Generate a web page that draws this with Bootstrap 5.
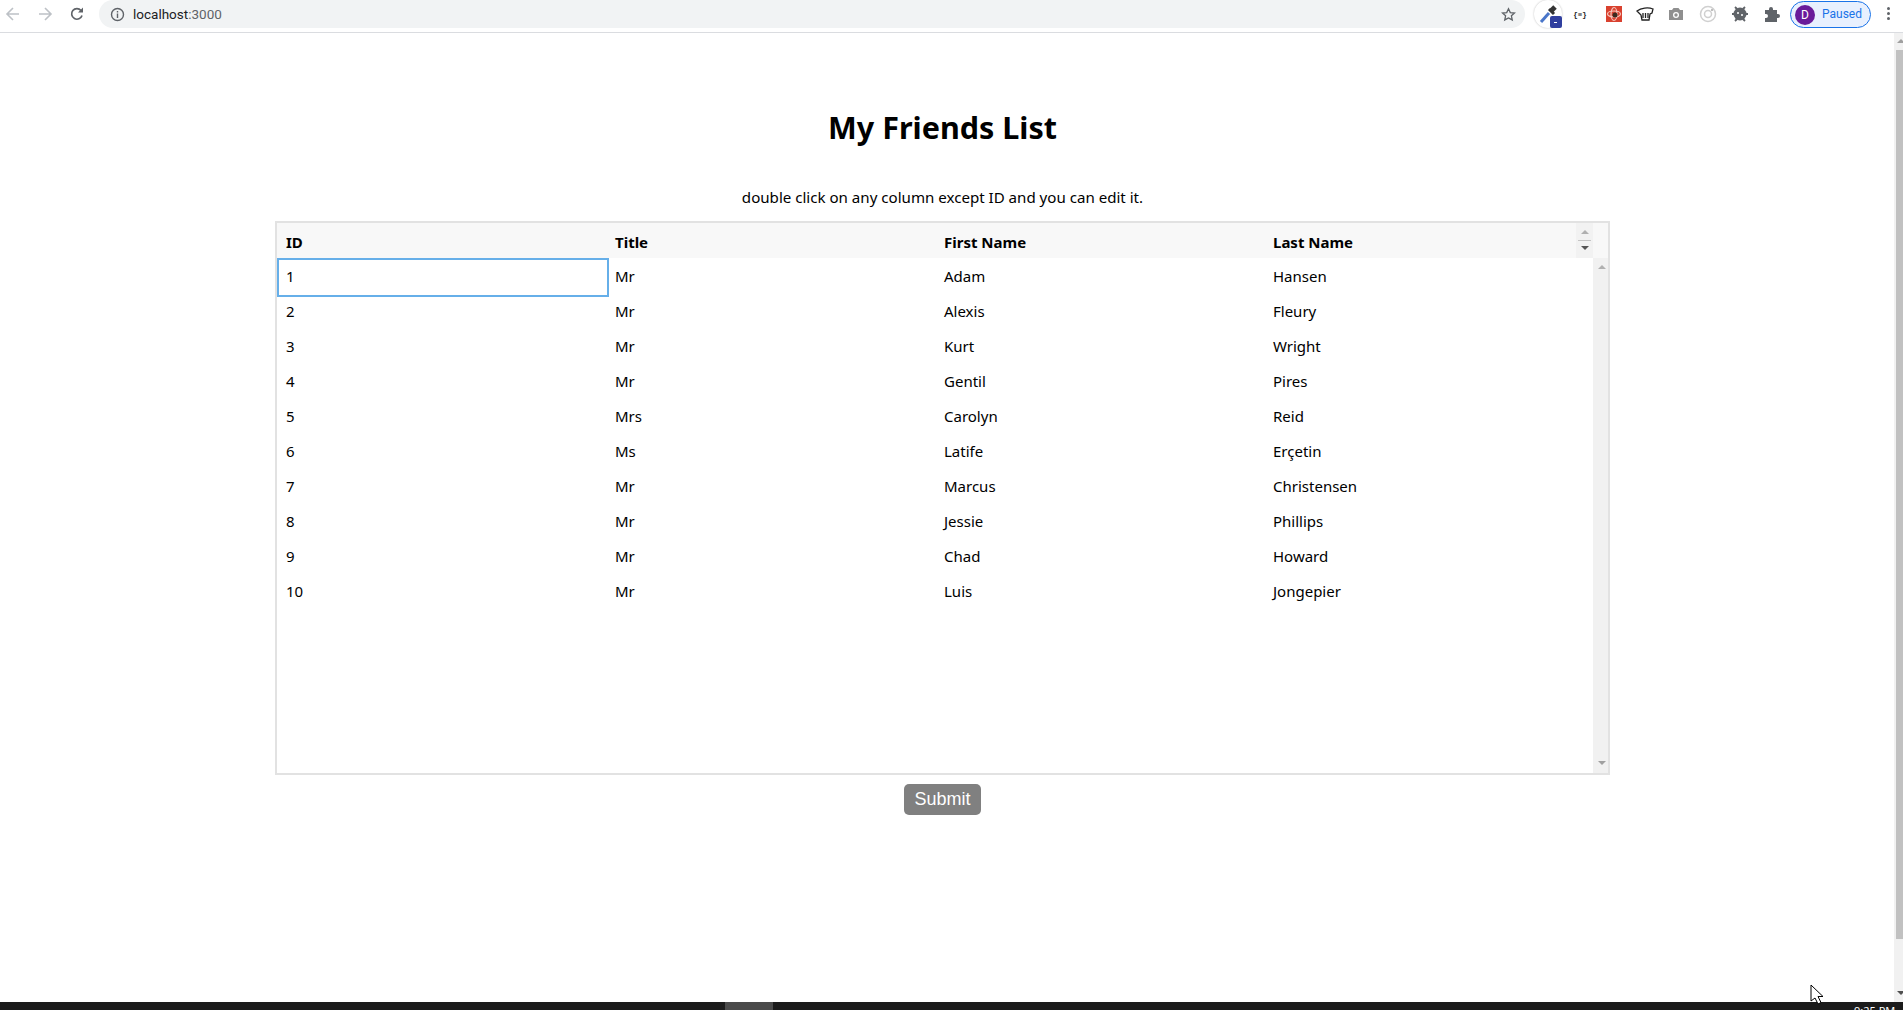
<!DOCTYPE html>
<html lang="en">
<head>
    <meta charset="UTF-8">
    <title>My Friends List</title>
    <link href="https://cdn.jsdelivr.net/npm/bootstrap@5.3.0/dist/css/bootstrap.min.css" rel="stylesheet">
    <style>
        html, body { height: 100%; overflow: hidden; }
        body { font-family: "Noto Sans", "Open Sans", sans-serif; color: #000; background: #fff; }
        .frame { height: 1010px; }

        /* browser chrome */
        .chrome-bar { height: 33px; border-bottom: 1px solid #dadce0; background: #fff; }
        .nav-btn { width: 32px; height: 28px; }
        .nav-btn:first-child { margin-left: -3px; }
        .url-pill { width: 1426px; height: 28px; margin-left: 6px; background: #f1f3f4; border-radius: 14px; padding-left: 11px; font-family: Roboto, sans-serif; font-size: 13.5px; color: #5f6368; }
        .url-host { color: #202124; }
        .star-icon { margin-right: 9px; }
        .ext-row { width: 378px; height: 28px; position: relative; }
        .ext-icon { position: absolute; top: 4px; width: 20px; height: 20px; }
        .dropper-wrap { position: absolute; left: 9px; top: 0; width: 28px; height: 28px; border-radius: 50%; box-shadow: 0 0 2px #bbb; background: #fff; }
        .dropper-badge { position: absolute; right: 0; bottom: 0; width: 12px; height: 12px; background: #303f9f; border-radius: 2px; }
        .dropper-badge::after { content: ""; position: absolute; left: 4px; top: 6px; width: 3px; height: 1px; background: #fff; }
        .paused-pill { position: absolute; left: 265px; top: 1px; width: 81px; height: 27px; border: 1px solid #1a73e8; border-radius: 14px; background: #e8f0fe; color: #1a73e8; font-family: Roboto, sans-serif; font-size: 12px; padding-left: 31px; line-height: 25px; }
        .avatar-dot { position: absolute; left: 4px; top: 3px; width: 20px; height: 20px; border-radius: 50%; background: #6a1b9a; color: #fff; text-align: center; line-height: 20px; font-size: 12px; }
        .menu-dots { position: absolute; left: 362px; top: 7px; width: 3px; height: 15px; }
        .menu-dots i { display: block; width: 3px; height: 3px; margin-bottom: 2px; border-radius: 50%; background: #5f6368; }

        /* page */
        .page-body { height: 969px; }
        .page-main { width: 1885px; padding-top: 72px; }
        .page-title { font-size: 30.5px; font-weight: 700; line-height: 44px; margin: 0 0 37px; text-align: center; }
        .hint-line { font-size: 15.1px; line-height: 22px; margin: 0 0 13px; text-align: center; }
        .grid-box { width: 1335px; height: 554px; margin-left: 275px; border: 2px solid #e2e2e2; }
        .grid-head { height: 35px; background: #f8f8f8; font-weight: 700; font-size: 15px; }
        .grid-head .grid-cell { padding-top: 4px; }
        .grid-head .grid-cell:nth-child(4) { flex-basis: 312px; width: 312px; }
        .grid-body { height: 515px; }
        .grid-rows { flex: 1 1 auto; padding-top: 2px; }
        .grid-line { height: 35px; font-size: 15px; }
        .grid-line .grid-cell { line-height: 33px; }
        .grid-cell { width: 329px; padding-left: 9px; flex: 0 0 329px; line-height: 35px; }
        .cell-active { position: relative; }
        .cell-active::after { content: ""; position: absolute; left: 0; right: -3px; top: -2px; bottom: -2px; border: 2px solid #66afe9; }
        .sort-box { width: 17px; height: 35px; background: #f2f2f2; position: relative; }
        .sort-rule { position: absolute; left: 2px; right: 2px; top: 17px; height: 1px; background: #c4c4c4; }
        .tri { position: absolute; width: 0; height: 0; border-left: 4px solid transparent; border-right: 4px solid transparent; }
        .tri-up { border-bottom: 4px solid #b0b0b0; }
        .tri-down { border-top: 4px solid #555; }
        .grid-scroll { width: 15px; background: #f1f1f1; position: relative; }
        .submit-wrap { margin-top: 9px; text-align: center; }
        .send-btn { width: 77px; height: 31px; padding: 0; border: 0; border-radius: 5px; background: #808080; color: #fff; font-family: "Liberation Sans", Arial, sans-serif; font-size: 18px; line-height: 31px; }

        /* page scrollbar */
        .page-scroll { width: 9px; margin-left: auto; background: #f1f1f1; position: relative; overflow: hidden; }
        .page-thumb { position: absolute; left: 2px; right: 0; top: 17px; height: 889px; background: #c1c1c1; }

        /* windows taskbar */
        .task-bar { height: 8px; background: #1b1b1b; position: relative; overflow: hidden; color: #fff; }
        .task-active { position: absolute; left: 725px; top: 0; width: 48px; height: 8px; background: #4a4a4a; }
        .task-clock { position: absolute; left: 1854px; top: 2px; font-size: 11px; line-height: 14px; }
        .mouse-arrow { position: absolute; left: 1810px; top: 984px; width: 14px; height: 21px; }
    </style>
</head>
<body>
<div class="frame d-flex flex-column position-relative">

    <div class="chrome-bar d-flex align-items-start">
        <div class="nav-btn d-flex align-items-center justify-content-center">
            <svg width="16" height="16" viewBox="0 0 16 16" fill="none" stroke="#bdc1c6" stroke-width="1.6"><path d="M14 8H2.5M8 2 2 8l6 6"/></svg>
        </div>
        <div class="nav-btn d-flex align-items-center justify-content-center">
            <svg width="16" height="16" viewBox="0 0 16 16" fill="none" stroke="#bdc1c6" stroke-width="1.6"><path d="M2 8h11.5M8 2l6 6-6 6"/></svg>
        </div>
        <div class="nav-btn d-flex align-items-center justify-content-center">
            <svg width="16" height="16" viewBox="0 0 16 16" fill="none" stroke="#5f6368" stroke-width="1.7"><path d="M13 9.5A5.3 5.3 0 1 1 12 4.5"/><path d="M14 1.5v5h-5z" fill="#5f6368" stroke="none"/></svg>
        </div>
        <div class="url-pill d-flex align-items-center gap-2">
            <svg width="15" height="15" viewBox="0 0 15 15" fill="none" stroke="#5f6368" stroke-width="1.4"><circle cx="7.5" cy="7.5" r="6"/><path d="M7.5 6.5V11M7.5 4v1.5"/></svg>
            <span><span class="url-host">localhost</span>:3000</span>
            <svg class="ms-auto star-icon" width="15" height="15" viewBox="0 0 16 16" fill="none" stroke="#5f6368" stroke-width="1.4"><path d="m8 1.8 1.9 4.1 4.5.5-3.3 3 .9 4.4L8 11.6l-4 2.2.9-4.4-3.3-3 4.5-.5z"/></svg>
        </div>
        <div class="ext-row">
            <div class="dropper-wrap">
                <svg width="28" height="28" viewBox="0 0 28 28" fill="none"><path d="M7 22 15 13" stroke="#4a76c9" stroke-width="3"/><path d="m15 9 5 5" stroke="#333" stroke-width="3"/><path d="m17 11 4-4" stroke="#333" stroke-width="5"/></svg>
                <div class="dropper-badge"></div>
            </div>
            <svg class="ext-icon" style="left:45px" viewBox="0 0 20 20"><text x="10" y="13" font-family="Liberation Mono" font-size="7.5" font-weight="700" text-anchor="middle" fill="#222">{≡}</text></svg>
            <svg class="ext-icon" style="left:79px" viewBox="0 0 20 20"><rect x="2" y="2" width="16" height="16" fill="#d9412f"/><ellipse cx="10" cy="10" rx="6.500" ry="3" fill="none" stroke="#f4c6bd" stroke-width="1.200"/><ellipse cx="10" cy="10" rx="3" ry="6.500" fill="none" stroke="#f4c6bd" stroke-width="1.200"/><circle cx="11" cy="11" r="2.500" fill="#3a2a20"/></svg>
            <svg class="ext-icon" style="left:110px" viewBox="0 0 20 20" fill="none" stroke="#222" stroke-width="1.300"><path d="M2 7c4-3 11-4 16-2l-1 4-2 1-1 6H7L6 11z"/><path d="M8 9v5M10.500 9v5M13 9v5"/></svg>
            <svg class="ext-icon" style="left:141px" viewBox="0 0 20 20"><path d="M3 6h3l1.500-2h5L14 6h3v10H3z" fill="#8f8f8f"/><circle cx="10" cy="11" r="3" fill="#fff"/><circle cx="10" cy="11" r="1.700" fill="#8f8f8f"/></svg>
            <svg class="ext-icon" style="left:173px" viewBox="0 0 20 20" fill="none" stroke="#d0d0d0" stroke-width="1.500"><circle cx="10" cy="10" r="7.500"/><circle cx="10" cy="10" r="3.500"/><circle cx="14" cy="6" r="1" fill="#aaa" stroke="none"/></svg>
            <svg class="ext-icon" style="left:205px" viewBox="0 0 20 20" fill="#5f6368"><circle cx="10" cy="10" r="6.500"/><path d="M5 3l2 2M15 3l-2 2M2 10h3M18 10h-3M5 17l2-2M15 17l-2-2" stroke="#5f6368" stroke-width="1.800"/><circle cx="8" cy="9" r="1" fill="#fff"/><circle cx="12" cy="11" r="1" fill="#fff"/></svg>
            <svg class="ext-icon" style="left:237px" viewBox="0 0 20 20" fill="#5f6368"><path d="M3 6h4V5a2 2 0 0 1 4 0v1h4v4h1a2 2 0 0 1 0 4h-1v4H3v-4h1a2 2 0 0 0 0-4H3z"/></svg>
            <div class="paused-pill">Paused<div class="avatar-dot">D</div></div>
            <div class="menu-dots"><i></i><i></i><i></i></div>
        </div>
    </div>

    <div class="page-body d-flex">
        <div class="page-main">
            <h1 class="page-title">My Friends List</h1>
            <p class="hint-line">double click on any column except ID and you can edit it.</p>
            <div class="grid-box">
                <div class="grid-head d-flex align-items-center">
                    <div class="grid-cell">ID</div>
                    <div class="grid-cell">Title</div>
                    <div class="grid-cell">First Name</div>
                    <div class="grid-cell">Last Name</div>
                    <div class="sort-box">
                        <span class="tri tri-up" style="left:4.5px;top:7px"></span>
                        <span class="sort-rule"></span>
                        <span class="tri tri-down" style="left:4.5px;top:23px"></span>
                    </div>
                </div>
                <div class="grid-body d-flex">
                    <div class="grid-rows" id="friendRows"></div>
                    <div class="grid-scroll">
                        <span class="tri tri-up" style="left:4.5px;top:7px"></span>
                        <span class="tri tri-down" style="left:4.5px;bottom:8px;border-top-color:#a0a0a0"></span>
                    </div>
                </div>
            </div>
            <div class="submit-wrap"><button type="button" class="btn send-btn">Submit</button></div>
        </div>
        <div class="page-scroll">
            <span class="tri tri-up" style="left:3px;top:6px;border-bottom-color:#a0a0a0"></span>
            <div class="page-thumb"></div>
            <span class="tri tri-down" style="left:3px;bottom:7px;border-top-color:#505050"></span>
        </div>
    </div>

    <div class="task-bar">
        <div class="task-active"></div>
        <div class="task-clock">9:25 PM</div>
    </div>

    <svg class="mouse-arrow" viewBox="0 0 14 21"><path d="M1 1v16l4-3 3 6 3-1.500-3-6h5z" fill="#fff" stroke="#000" stroke-width="1"/></svg>
</div>

<script>
    const amigos = [
        [1, 'Mr', 'Adam', 'Hansen'],
        [2, 'Mr', 'Alexis', 'Fleury'],
        [3, 'Mr', 'Kurt', 'Wright'],
        [4, 'Mr', 'Gentil', 'Pires'],
        [5, 'Mrs', 'Carolyn', 'Reid'],
        [6, 'Ms', 'Latife', 'Erçetin'],
        [7, 'Mr', 'Marcus', 'Christensen'],
        [8, 'Mr', 'Jessie', 'Phillips'],
        [9, 'Mr', 'Chad', 'Howard'],
        [10, 'Mr', 'Luis', 'Jongepier']
    ];
    const filas = document.getElementById('friendRows');
    amigos.forEach((a, i) => {
        const row = document.createElement('div');
        row.className = 'grid-line d-flex';
        row.innerHTML = a.map((v, j) => `<div class="grid-cell${i === 0 && j === 0 ? ' cell-active' : ''}">${v}</div>`).join('');
        filas.appendChild(row);
    });
</script>
<script src="https://cdn.jsdelivr.net/npm/bootstrap@5.3.0/dist/js/bootstrap.bundle.min.js"></script>
</body>
</html>
